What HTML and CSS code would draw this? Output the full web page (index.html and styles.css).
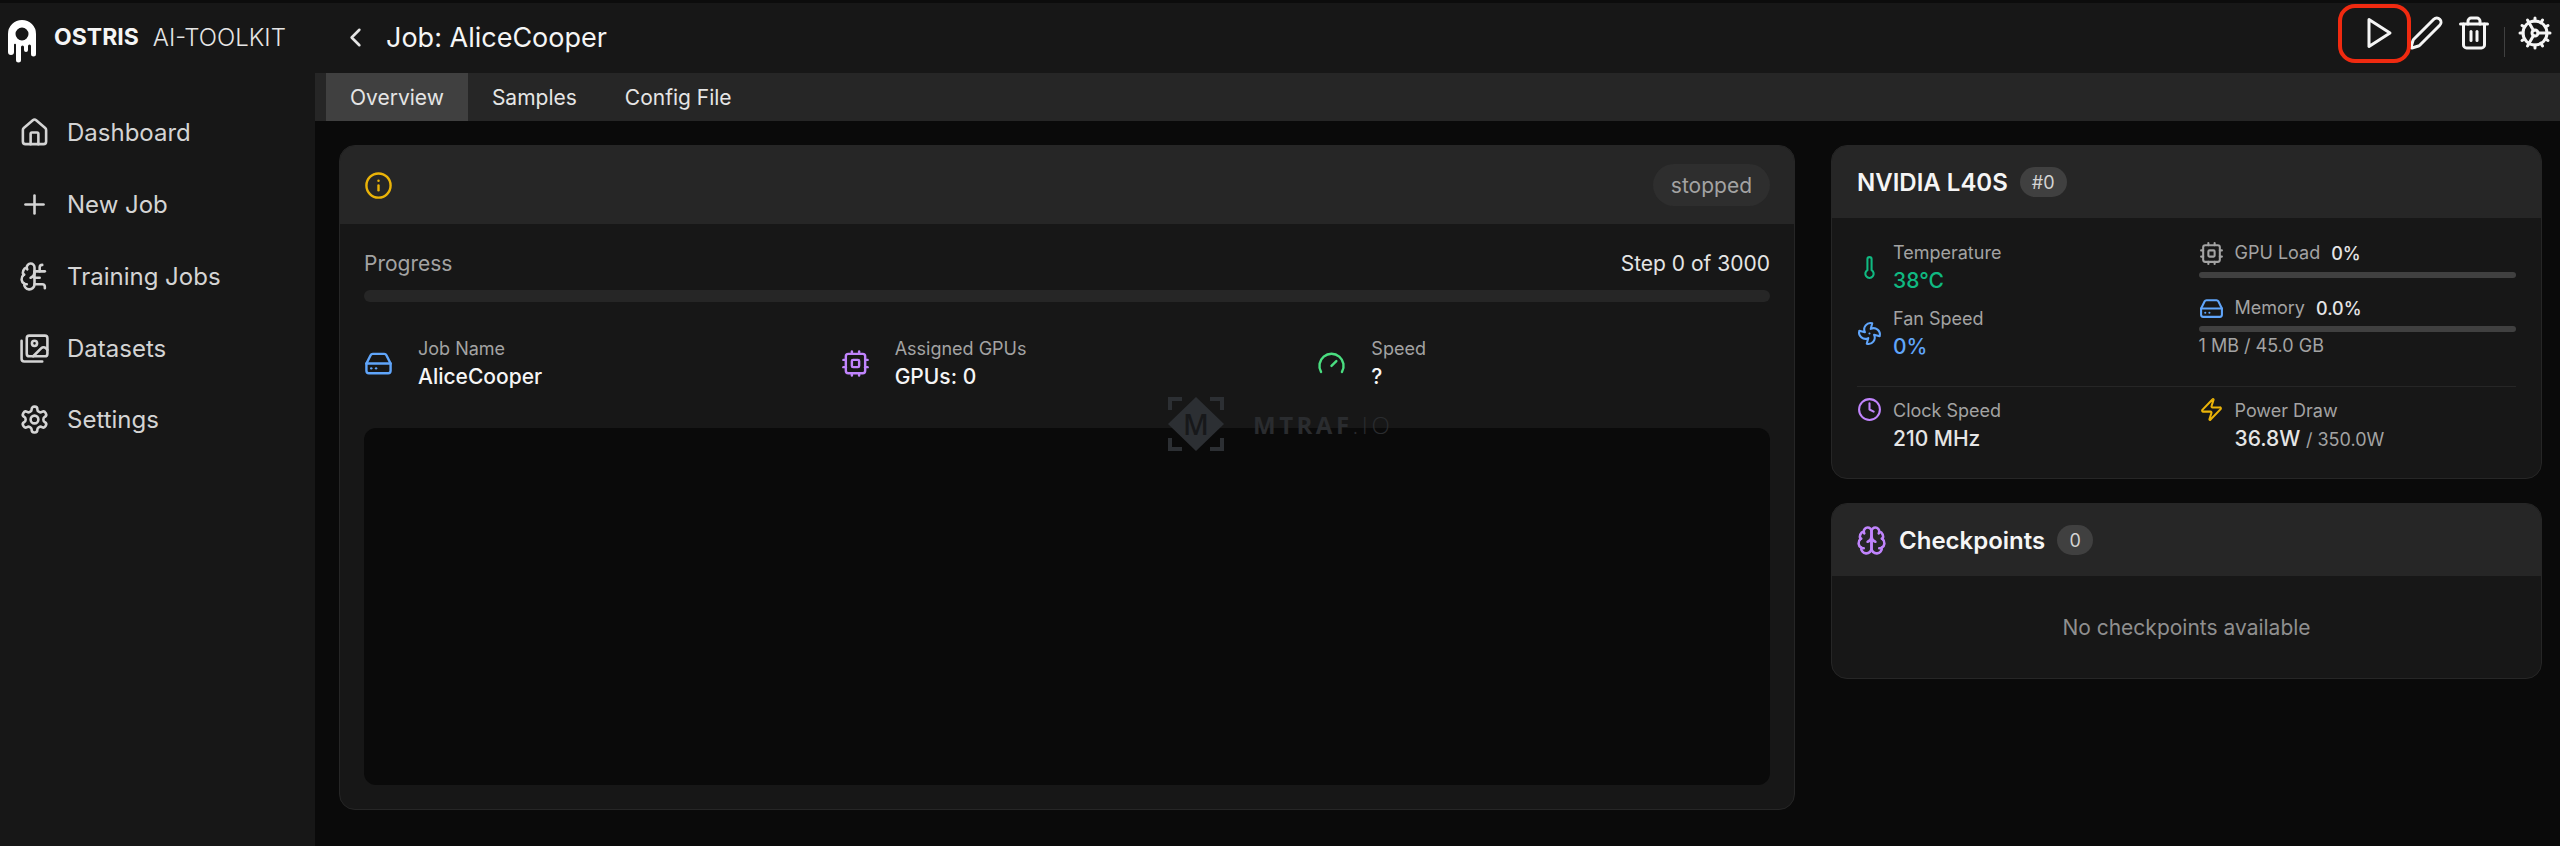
FILE: index.html
```html
<!DOCTYPE html>
<html lang="en">
<head>
    <meta charset="UTF-8">
    <meta name="viewport" content="width=device-width, initial-scale=1.0">
    <title>Job: AliceCooper</title>
    <link rel="stylesheet" href="styles.css">
</head>
<body>
    <div class="top-strip"></div>
    <div class="app">
        <aside class="sidebar">
            <div class="brand">
                <svg class="brand-logo" viewBox="0 0 28 43"><path fill="#fff" fill-rule="evenodd" d="M0 14A14 14 0 0 1 28 14V34a2.5 2.5 0 0 1-5 0V26a1.5 1.5 0 0 0-3 0v4a2 2 0 0 1-4 0V27a1.5 1.5 0 0 0-3 0V40a2.5 2.5 0 0 1-5 0V25a1 1 0 0 0-2-.5V32a3 3 0 0 1-6 0ZM14 7.500a6.500 6.500 0 1 0 0 13 6.500 6.500 0 0 0 0-13Z"/></svg>
                <span class="brand-name">OSTRIS</span>
                <span class="brand-sub">AI-TOOLKIT</span>
            </div>
            <nav class="nav">
                <a class="nav-item">
                    <svg class="icon nav-icon" viewBox="0 0 24 24"><path d="M15 21v-8a1 1 0 0 0-1-1h-4a1 1 0 0 0-1 1v8"/><path d="M3 10a2 2 0 0 1 .709-1.528l7-5.999a2 2 0 0 1 2.582 0l7 5.999A2 2 0 0 1 21 10v9a2 2 0 0 1-2 2H5a2 2 0 0 1-2-2z"/></svg>
                    Dashboard
                </a>
                <a class="nav-item">
                    <svg class="icon nav-icon" viewBox="0 0 24 24"><path d="M5 12h14"/><path d="M12 5v14"/></svg>
                    New Job
                </a>
                <a class="nav-item">
                    <svg class="icon nav-icon" viewBox="0 0 24 24"><path d="M12 5a3 3 0 1 0-5.997.125 4 4 0 0 0-2.526 5.77 4 4 0 0 0 .556 6.588A4 4 0 1 0 12 18Z"/><path d="M9 13a4.500 4.500 0 0 0 3-4"/><path d="M6.003 5.125A3 3 0 0 0 6.401 6.500"/><path d="M3.477 10.896a4 4 0 0 1 .585-.396"/><path d="M6 18a4 4 0 0 1-1.967-.516"/><path d="M12 13h4"/><path d="M12 18h6a2 2 0 0 1 2 2v1"/><path d="M12 8h8"/><path d="M16 8V5a2 2 0 0 1 2-2"/></svg>
                    Training Jobs
                </a>
                <a class="nav-item">
                    <svg class="icon nav-icon" viewBox="0 0 24 24"><path d="M18 22H4a2 2 0 0 1-2-2V6"/><path d="m22 13-1.296-1.296a2.410 2.410 0 0 0-3.408 0L11 18"/><circle cx="12" cy="8" r="2"/><rect width="16" height="16" x="6" y="2" rx="2"/></svg>
                    Datasets
                </a>
                <a class="nav-item">
                    <svg class="icon nav-icon" viewBox="0 0 24 24"><path d="M12.220 2h-.44a2 2 0 0 0-2 2v.18a2 2 0 0 1-1 1.730l-.43.25a2 2 0 0 1-2 0l-.15-.08a2 2 0 0 0-2.730.73l-.22.38a2 2 0 0 0 .73 2.730l.15.1a2 2 0 0 1 1 1.720v.51a2 2 0 0 1-1 1.740l-.15.09a2 2 0 0 0-.73 2.730l.22.38a2 2 0 0 0 2.730.73l.15-.08a2 2 0 0 1 2 0l.43.25a2 2 0 0 1 1 1.730V20a2 2 0 0 0 2 2h.44a2 2 0 0 0 2-2v-.18a2 2 0 0 1 1-1.730l.43-.25a2 2 0 0 1 2 0l.15.08a2 2 0 0 0 2.730-.73l.22-.39a2 2 0 0 0-.73-2.730l-.15-.08a2 2 0 0 1-1-1.740v-.5a2 2 0 0 1 1-1.740l.15-.09a2 2 0 0 0 .73-2.730l-.22-.38a2 2 0 0 0-2.730-.73l-.15.08a2 2 0 0 1-2 0l-.43-.25a2 2 0 0 1-1-1.730V4a2 2 0 0 0-2-2z"/><circle cx="12" cy="12" r="3"/></svg>
                    Settings
                </a>
            </nav>
        </aside>

        <div class="page">
            <header class="topbar">
                <svg class="icon back-icon" viewBox="0 0 24 24"><path d="m15 18-6-6 6-6"/></svg>
                <h1 class="job-title">Job: AliceCooper</h1>
                <div class="actions">
                    <svg class="icon action-icon" viewBox="0 0 24 24"><polygon points="6 3 20 12 6 21 6 3"/></svg>
                    <svg class="icon action-icon" viewBox="0 0 24 24"><path d="M21.174 6.812a1 1 0 0 0-3.986-3.987L3.842 16.174a2 2 0 0 0-.5.83l-1.321 4.352a.5.5 0 0 0 .623.622l4.353-1.320a2 2 0 0 0 .83-.497z"/></svg>
                    <svg class="icon action-icon" viewBox="0 0 24 24"><path d="M3 6h18"/><path d="M19 6v14c0 1-1 2-2 2H7c-1 0-2-1-2-2V6"/><path d="M8 6V4c0-1 1-2 2-2h4c1 0 2 1 2 2v2"/><path d="M10 11v6"/><path d="M14 11v6"/></svg>
                    <span class="actions-divider"></span>
                    <svg class="icon action-icon" viewBox="0 0 24 24"><path d="M12 20a8 8 0 1 0 0-16 8 8 0 0 0 0 16Z"/><path d="M12 14a2 2 0 1 0 0-4 2 2 0 0 0 0 4Z"/><path d="M12 2v2"/><path d="M12 22v-2"/><path d="m17 20.660-1-1.730"/><path d="M11 10.270 7 3.340"/><path d="m20.660 17-1.730-1"/><path d="m3.340 7 1.730 1"/><path d="M14 12h8"/><path d="M2 12h2"/><path d="m20.660 7-1.730 1"/><path d="m3.340 17 1.730-1"/><path d="m17 3.340-1 1.730"/><path d="m11 13.730-4 6.930"/></svg>
                </div>
                <!-- red box drawn over the screenshot -->
                <div class="callout"></div>
            </header>

            <nav class="tabs">
                <a class="tab tab-active">Overview</a>
                <a class="tab">Samples</a>
                <a class="tab">Config File</a>
            </nav>

            <main class="content">
                <section class="card job-card">
                    <div class="card-header job-header">
                        <svg class="icon stat-icon yellow" viewBox="0 0 24 24"><circle cx="12" cy="12" r="10"/><path d="M12 16v-4"/><path d="M12 8h.01"/></svg>
                        <span class="status-pill">stopped</span>
                    </div>
                    <div class="job-body">
                        <div class="progress-row">
                            <span class="progress-label">Progress</span>
                            <span class="progress-step">Step 0 of 3000</span>
                        </div>
                        <div class="progress-track"></div>
                        <div class="job-stats">
                            <div class="job-stat">
                                <svg class="icon stat-icon blue" viewBox="0 0 24 24"><path d="M22 12H2"/><path d="M5.450 5.110 2 12v6a2 2 0 0 0 2 2h16a2 2 0 0 0 2-2v-6l-3.450-6.890A2 2 0 0 0 16.760 4H7.240a2 2 0 0 0-1.790 1.110z"/><path d="M6 16h.01"/><path d="M10 16h.01"/></svg>
                                <div>
                                    <div class="stat-label">Job Name</div>
                                    <div class="stat-value">AliceCooper</div>
                                </div>
                            </div>
                            <div class="job-stat">
                                <svg class="icon stat-icon purple" viewBox="0 0 24 24"><rect width="16" height="16" x="4" y="4" rx="2"/><rect width="6" height="6" x="9" y="9" rx="1"/><path d="M15 2v2"/><path d="M15 20v2"/><path d="M2 15h2"/><path d="M2 9h2"/><path d="M20 15h2"/><path d="M20 9h2"/><path d="M9 2v2"/><path d="M9 20v2"/></svg>
                                <div>
                                    <div class="stat-label">Assigned GPUs</div>
                                    <div class="stat-value">GPUs: 0</div>
                                </div>
                            </div>
                            <div class="job-stat">
                                <svg class="icon stat-icon green" viewBox="0 0 24 24"><path d="m12 14 4-4"/><path d="M3.340 19a10 10 0 1 1 17.320 0"/></svg>
                                <div>
                                    <div class="stat-label">Speed</div>
                                    <div class="stat-value">?</div>
                                </div>
                            </div>
                        </div>
                        <div class="log-panel"></div>
                    </div>
                </section>

                <div class="side-column">
                    <section class="card">
                        <div class="card-header side-header">
                            <h2 class="card-title">NVIDIA L40S</h2>
                            <span class="count-badge">#0</span>
                        </div>
                        <div class="gpu-body">
                            <div class="gpu-grid">
                                <div class="gpu-col">
                                    <div class="gpu-stat">
                                        <svg class="icon small-icon emerald" viewBox="0 0 24 24"><path d="M14 4v10.540a4 4 0 1 1-4 0V4a2 2 0 0 1 4 0Z"/></svg>
                                        <div>
                                            <div class="stat-label">Temperature</div>
                                            <div class="gpu-value emerald">38°C</div>
                                        </div>
                                    </div>
                                    <div class="gpu-stat">
                                        <svg class="icon small-icon blue" viewBox="0 0 24 24"><path d="M10.827 16.379a6.082 6.082 0 0 1-8.618-7.002l5.412 1.450a6.082 6.082 0 0 1 7.002-8.618l-1.450 5.412a6.082 6.082 0 0 1 8.618 7.002l-5.412-1.450a6.082 6.082 0 0 1-7.002 8.618l1.450-5.412Z"/><path d="M12 12v.01"/></svg>
                                        <div>
                                            <div class="stat-label">Fan Speed</div>
                                            <div class="gpu-value blue">0%</div>
                                        </div>
                                    </div>
                                </div>
                                <div class="gpu-col">
                                    <div class="meter-row">
                                        <svg class="icon small-icon muted" viewBox="0 0 24 24"><rect width="16" height="16" x="4" y="4" rx="2"/><rect width="6" height="6" x="9" y="9" rx="1"/><path d="M15 2v2"/><path d="M15 20v2"/><path d="M2 15h2"/><path d="M2 9h2"/><path d="M20 15h2"/><path d="M20 9h2"/><path d="M9 2v2"/><path d="M9 20v2"/></svg>
                                        <span class="stat-label">GPU Load</span>
                                        <span class="meter-value">0%</span>
                                    </div>
                                    <div class="meter-track meter-load"></div>
                                    <div class="meter-row">
                                        <svg class="icon small-icon blue" viewBox="0 0 24 24"><path d="M22 12H2"/><path d="M5.450 5.110 2 12v6a2 2 0 0 0 2 2h16a2 2 0 0 0 2-2v-6l-3.450-6.890A2 2 0 0 0 16.760 4H7.240a2 2 0 0 0-1.790 1.110z"/><path d="M6 16h.01"/><path d="M10 16h.01"/></svg>
                                        <span class="stat-label">Memory</span>
                                        <span class="meter-value">0.0%</span>
                                    </div>
                                    <div class="meter-track meter-memory"></div>
                                    <div class="stat-label memory-note">1 MB / 45.0 GB</div>
                                </div>
                            </div>
                            <div class="gpu-grid gpu-footer">
                                <div class="gpu-stat stat-top">
                                    <svg class="icon small-icon purple" viewBox="0 0 24 24"><circle cx="12" cy="12" r="10"/><path d="M12 6v6l4 2"/></svg>
                                    <div>
                                        <div class="stat-label">Clock Speed</div>
                                        <div class="gpu-value">210 MHz</div>
                                    </div>
                                </div>
                                <div class="gpu-stat stat-top">
                                    <svg class="icon small-icon yellow" viewBox="0 0 24 24"><path d="M4 14a1 1 0 0 1-.78-1.630l9.900-10.200a.5.5 0 0 1 .86.46l-1.920 6.020A1 1 0 0 0 13 10h7a1 1 0 0 1 .78 1.630l-9.900 10.200a.5.5 0 0 1-.86-.46l1.920-6.020A1 1 0 0 0 11 14z"/></svg>
                                    <div>
                                        <div class="stat-label">Power Draw</div>
                                        <div class="gpu-value">36.8W <span class="gpu-limit">/ 350.0W</span></div>
                                    </div>
                                </div>
                            </div>
                        </div>
                    </section>

                    <section class="card">
                        <div class="card-header side-header">
                            <svg class="icon brain-icon purple" viewBox="0 0 24 24"><path d="M12 5a3 3 0 1 0-5.997.125 4 4 0 0 0-2.526 5.770 4 4 0 0 0 .556 6.588A4 4 0 1 0 12 18Z"/><path d="M12 5a3 3 0 1 1 5.997.125 4 4 0 0 1 2.526 5.770 4 4 0 0 1-.556 6.588A4 4 0 1 1 12 18Z"/><path d="M15 13a4.500 4.500 0 0 1-3-4 4.500 4.500 0 0 1-3 4"/><path d="M17.599 6.500a3 3 0 0 0 .399-1.375"/><path d="M6.003 5.125A3 3 0 0 0 6.401 6.500"/><path d="M3.477 10.896a4 4 0 0 1 .585-.396"/><path d="M19.938 10.500a4 4 0 0 1 .585.396"/><path d="M6 18a4 4 0 0 1-1.967-.516"/><path d="M19.967 17.484A4 4 0 0 1 18 18"/></svg>
                            <h2 class="card-title">Checkpoints</h2>
                            <span class="count-badge">0</span>
                        </div>
                        <div class="empty-note">No checkpoints available</div>
                    </section>
                </div>
            </main>
        </div>
    </div>

    <!-- watermark lying over the page -->
    <div class="watermark">
        <svg class="watermark-logo" viewBox="0 0 56 54">
            <path class="watermark-shape" d="M28 0 56 27 28 54 0 27Z"/>
            <path class="watermark-line" d="M2 13V2H14M42 2H54V13M2 41V52H14M42 52H54V41"/>
            <text class="watermark-m" x="28" y="38">M</text>
        </svg>
        <span class="watermark-text">MTRAF<span class="watermark-thin">.IO</span></span>
    </div>
</body>
</html>
```

FILE: styles.css
```css
* {
    box-sizing: border-box;
}

html,
body {
    margin: 0;
    height: 100%;
}

body {
    position: relative;
    overflow: hidden;
    display: flex;
    flex-direction: column;
    background: #0a0a0a;
    color: #e5e5e5;
    font-family: "Inter", "Liberation Sans", sans-serif;
}

h1,
h2 {
    margin: 0;
}

.top-strip {
    height: 3px;
    background: #0c0c0c;
}

.app {
    flex: 1;
    display: flex;
    min-height: 0;
}

.icon {
    flex: none;
    fill: none;
    stroke: currentColor;
    stroke-width: 2;
    stroke-linecap: round;
    stroke-linejoin: round;
}

.yellow { color: #eab308; }
.blue { color: #60a5fa; }
.purple { color: #c084fc; }
.green { color: #4ade80; }
.emerald { color: #10b981; }
.muted { color: #a3a3a3; }

/* Sidebar */
.sidebar {
    width: 315px;
    flex: none;
    background: #171717;
}

.brand {
    height: 70px;
    display: flex;
    align-items: center;
    padding: 0 0 2px 8px;
}

.brand-logo {
    width: 28px;
    height: 43px;
    margin: 8px 18px 0 0;
}

.brand-name {
    font-size: 23px;
    font-weight: 700;
    color: #f5f5f5;
    margin-right: 14px;
}

.brand-sub {
    font-size: 24px;
    font-weight: 300;
    color: #e5e5e5;
}

.nav {
    display: flex;
    flex-direction: column;
    padding-top: 24px;
}

.nav-item {
    height: 71.75px;
    display: flex;
    align-items: center;
    gap: 17px;
    padding-left: 19px;
    font-size: 24px;
    color: #d4d4d4;
}

.nav-icon {
    width: 31px;
    height: 31px;
}

/* Top bar */
.page {
    flex: 1;
    min-width: 0;
    display: flex;
    flex-direction: column;
}

.topbar {
    position: relative;
    height: 70px;
    flex: none;
    display: flex;
    align-items: center;
    padding: 0 7px 2px 25px;
    background: #171717;
}

.back-icon {
    width: 31px;
    height: 31px;
    margin-right: 15px;
}

.job-title {
    font-size: 27px;
    font-weight: 400;
    color: #f5f5f5;
}

.actions {
    margin-left: auto;
    margin-bottom: 8px;
    display: flex;
    align-items: center;
    gap: 12px;
}

.action-icon {
    width: 36px;
    height: 36px;
    color: #f5f5f5;
}

.actions-divider {
    width: 1px;
    height: 30px;
    margin-top: 18px;
    background: #404040;
}

.callout {
    position: absolute;
    top: 1px;
    right: 149px;
    width: 73px;
    height: 59px;
    border: 4px solid #f02a10;
    border-radius: 17px;
}

/* Tabs */
.tabs {
    height: 48px;
    flex: none;
    display: flex;
    padding-left: 11px;
    background: #262626;
}

.tab {
    display: flex;
    align-items: center;
    padding: 0 24px;
    font-size: 21px;
    color: #e5e5e5;
}

.tab-active {
    background: #404040;
}

/* Content */
.content {
    flex: 1;
    min-height: 0;
    display: flex;
    align-items: flex-start;
    gap: 36px;
    padding: 24px 18px 36px 24px;
}

.card {
    border: 1px solid #262626;
    border-radius: 16px;
    background: #171717;
    overflow: hidden;
}

.card-header {
    display: flex;
    align-items: center;
    background: #262626;
}

.job-card {
    width: 1456px;
    flex: none;
    height: 665px;
    display: flex;
    flex-direction: column;
}

.job-header {
    height: 78px;
    flex: none;
    justify-content: space-between;
    padding: 0 24px;
}

.stat-icon {
    width: 29px;
    height: 29px;
}

.status-pill {
    height: 42px;
    display: flex;
    align-items: center;
    padding: 0 18px;
    border-radius: 21px;
    background: #2e2e2e;
    font-size: 21px;
    color: #a3a3a3;
}

.job-body {
    flex: 1;
    min-height: 0;
    display: flex;
    flex-direction: column;
    padding: 22px 24px 24px;
}

.progress-row {
    display: flex;
    justify-content: space-between;
    align-items: center;
    height: 34px;
    font-size: 21px;
}

.progress-label {
    color: #a3a3a3;
}

.progress-step {
    color: #e5e5e5;
}

.progress-track {
    height: 12px;
    margin-top: 10px;
    border-radius: 6px;
    background: #262626;
}

.job-stats {
    display: grid;
    grid-template-columns: repeat(3, 1fr);
    gap: 24px;
    margin-top: 33px;
}

.job-stat {
    display: flex;
    align-items: center;
    gap: 25px;
}

.stat-label {
    font-size: 18px;
    line-height: 28px;
    color: #a3a3a3;
}

.stat-value {
    font-size: 21px;
    line-height: 28px;
    font-weight: 500;
    color: #f5f5f5;
}

.log-panel {
    flex: 1;
    margin-top: 37px;
    border-radius: 12px;
    background: #0a0a0a;
}

/* Right column */
.side-column {
    flex: 1;
    min-width: 0;
    display: flex;
    flex-direction: column;
    gap: 24px;
}

.side-header {
    height: 72px;
    padding: 0 25px;
}

.card-title {
    font-size: 24px;
    font-weight: 600;
    color: #f5f5f5;
}

.count-badge {
    min-width: 36px;
    height: 30px;
    display: flex;
    align-items: center;
    justify-content: center;
    margin-left: 12px;
    padding: 0 12px;
    border-radius: 15px;
    background: #404040;
    font-size: 18px;
    color: #d4d4d4;
}

.brain-icon {
    width: 31px;
    height: 31px;
    margin-left: -1px;
    margin-right: 12px;
}

.gpu-body {
    padding: 21px 25px 24px;
}

.gpu-grid {
    display: grid;
    grid-template-columns: repeat(2, 1fr);
    gap: 24px;
}

.gpu-col {
    display: flex;
    flex-direction: column;
    gap: 10px;
}

.gpu-stat {
    display: flex;
    align-items: center;
    gap: 11px;
}

.stat-top {
    align-items: flex-start;
}

.small-icon {
    width: 25px;
    height: 25px;
}

.gpu-value {
    font-size: 21px;
    line-height: 28px;
    font-weight: 500;
}

.gpu-limit {
    font-size: 18px;
    font-weight: 400;
    color: #a3a3a3;
}

.meter-row {
    display: flex;
    align-items: center;
    gap: 11px;
    height: 28px;
}

.meter-value {
    font-size: 18px;
    font-weight: 500;
    color: #e5e5e5;
}

.meter-track {
    height: 6px;
    margin-top: -5px;
    border-radius: 3px;
    background: #404040;
}

.meter-load {
    margin-bottom: 6px;
}

.meter-memory {
    margin-top: -6px;
}

.memory-note {
    margin-top: -10px;
}

.gpu-footer {
    margin-top: 25px;
    padding-top: 10px;
    border-top: 1px solid #262626;
}

.empty-note {
    height: 102px;
    display: flex;
    align-items: center;
    justify-content: center;
    font-size: 21px;
    color: #8f8f8f;
}

/* Watermark */
.watermark {
    position: absolute;
    left: 1168px;
    top: 397px;
    display: flex;
    align-items: center;
    gap: 29px;
}

.watermark-logo {
    width: 56px;
    height: 54px;
}

.watermark-shape {
    fill: #2c2f33;
}

.watermark-line {
    fill: none;
    stroke: #2c2f33;
    stroke-width: 4;
}

.watermark-m {
    font-family: "Open Sans", sans-serif;
    font-size: 28px;
    font-weight: 600;
    text-anchor: middle;
    fill: #17181a;
}

.watermark-text {
    font-family: "Open Sans", sans-serif;
    font-size: 24px;
    font-weight: 700;
    letter-spacing: 3.5px;
    color: #2a2c2f;
}

.watermark-thin {
    font-weight: 300;
}
```
